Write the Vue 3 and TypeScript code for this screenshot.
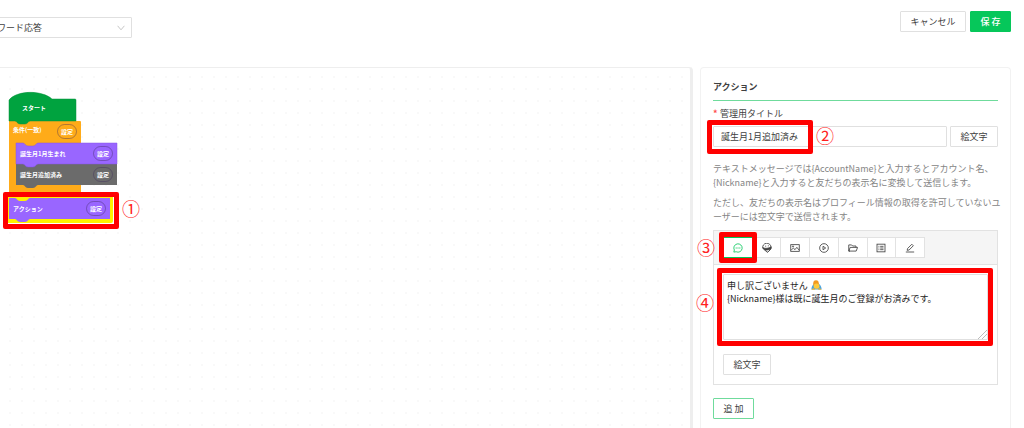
<script setup lang="ts">
import { ref } from 'vue'

interface Block {
  id: string
  label: string
  kind: string
  hasSetting: boolean
}

const blocks: Block[] = [
  { id: 'start', label: 'スタート', kind: 'start', hasSetting: false },
  { id: 'condition', label: '条件(一致)', kind: 'condition', hasSetting: true },
  { id: 'born', label: '誕生月1月生まれ', kind: 'born', hasSetting: true },
  { id: 'added', label: '誕生月追加済み', kind: 'added', hasSetting: true },
  { id: 'action', label: 'アクション', kind: 'action', hasSetting: true },
]

const tabs = [
  { id: 'text', label: 'テキスト' },
  { id: 'sticker', label: 'スタンプ' },
  { id: 'image', label: '画像' },
  { id: 'video', label: '動画' },
  { id: 'folder', label: 'フォルダ' },
  { id: 'list', label: 'リスト' },
  { id: 'edit', label: '編集' },
]

const responseType = ref('keyword')
const title = ref('誕生月1月追加済み')
const activeTab = ref('text')
const message = ref('申し訳ございません\u3000\n{Nickname}様は既に誕生月のご登録がお済みです。')
</script>

<template>
  <div class="page">
    <header class="topbar">
      <div class="type-select">
        <select v-model="responseType" aria-label="応答タイプ">
          <option value="keyword">キーワード応答</option>
        </select>
        <svg class="chevron" viewBox="0 0 8 6" aria-hidden="true">
          <path d="M0.6 0.8 L4 4.8 L7.4 0.8" fill="none" stroke="#bfbfbf" stroke-width="0.9" />
        </svg>
      </div>
      <div class="top-actions">
        <button type="button" class="btn cancel">キャンセル</button>
        <button type="button" class="btn save">保 存</button>
      </div>
    </header>

    <main class="workspace">
      <section class="canvas" aria-label="フロー">
        <svg class="shapes" viewBox="0 0 150 170" aria-hidden="true">
          <path d="M9 53 H80 Q81 53 81 54 V75 H40 V80 H16 V117 H81 V129 H9 Z" fill="#ffab19" />
          <path
            d="M9 32 C17 22 42 22 52 31 H75 Q76 31 76 32 V53 H30 C28 53 28 56 25 56 H20 C17 56 17 53 15 53 H9 Z"
            fill="#00a33f"
            stroke="#07913d"
            stroke-width="0.5"
          />
          <path
            d="M16 96 H117 V117 H38 C36 117 36 120 33 120 H28 C25 120 25 117 23 117 H16 Z"
            fill="#6b6b6b"
          />
          <path
            d="M16 75 H23 C25 75 25 78 28 78 H33 C36 78 36 75 38 75 H117 V96 H38 C36 96 36 99 33 99 H28 C25 99 25 96 23 96 H16 Z"
            fill="#9966ff"
            stroke="#8455e6"
            stroke-width="0.5"
          />
          <path d="M7 128 H113 V153 Q113 155 111 155 H7 Z" fill="#fff200" />
          <path
            d="M9 130 H15 C17 130 17 133 20 133 H25 C28 133 28 130 30 130 H110 V151 H30 C28 151 28 154 25 154 H20 C17 154 17 151 15 151 H9 Z"
            fill="#9966ff"
          />
        </svg>
        <div v-for="block in blocks" :key="block.id" class="node" :class="block.kind">
          <span>{{ block.label }}</span>
          <button v-if="block.hasSetting" type="button" class="setting">設定</button>
        </div>
        <div class="mark mark-action"><span class="num">①</span></div>
      </section>

      <aside class="panel">
        <h2>アクション</h2>
        <label class="field-label" for="manage-title"><span class="req">*</span>管理用タイトル</label>
        <div class="title-row">
          <input id="manage-title" v-model="title" type="text" />
          <button type="button" class="btn">絵文字</button>
          <div class="mark mark-title"><span class="num">②</span></div>
        </div>

        <div class="hints">
          <p>テキストメッセージでは{AccountName}と入力するとアカウント名、<br />{Nickname}と入力すると友だちの表示名に変換して送信します。</p>
          <p>ただし、友だちの表示名はプロフィール情報の取得を許可していないユ<br />ーザーには空文字で送信されます。</p>
        </div>

        <div class="message-card">
          <div class="tab-bar">
            <div class="tabs">
              <button
                v-for="tab in tabs"
                :key="tab.id"
                type="button"
                class="tab"
                :class="{ active: tab.id === activeTab }"
                :aria-label="tab.label"
                @click="activeTab = tab.id"
              >
                <svg viewBox="0 0 12 12" fill="none" stroke="currentColor" stroke-width="1" aria-hidden="true">
                  <template v-if="tab.id === 'text'">
                    <path d="M1 10.9 L1.6 8.4 A5 5 0 1 1 3.8 10.5 Z" />
                    <path d="M3.2 6 h1.2 M5.4 6 h1.2 M7.6 6 h1.2" stroke-width="1.2" />
                  </template>
                  <template v-else-if="tab.id === 'sticker'">
                    <path d="M1 6.4 A5 4.8 0 1 1 10.8 5.4" />
                    <path d="M1 5.6 C4 7.2 8 6.4 11 4.6 V6.8 C9 8.4 7.4 7.2 6.4 8.4 C4 8.8 1.8 8.4 1 5.6 Z" fill="currentColor" />
                    <path d="M3.6 8.6 L6.2 11.2 L8.4 9.6 L10.4 7.4" stroke-width="1.2" />
                    <path d="M3.8 3.8 h1.2 M7 3.4 h1.2" />
                  </template>
                  <template v-else-if="tab.id === 'image'">
                    <rect x="0.9" y="2" width="10.2" height="8" />
                    <path d="M1.2 8.8 L4 6 L6 8 L8.2 5.2 L11 8.6" />
                    <circle cx="3.6" cy="4.1" r="0.7" />
                  </template>
                  <template v-else-if="tab.id === 'video'">
                    <circle cx="6" cy="6" r="5.2" />
                    <path d="M4.8 3.9 L8 6 L4.8 8.1 Z" />
                  </template>
                  <template v-else-if="tab.id === 'folder'">
                    <path d="M2.4 9.7 H0.9 V2.3 H4.3 L5.6 3.6 H9.6 V5.3" />
                    <path d="M2.6 5.3 H11.5 L9.8 9.7 H1 Z" />
                  </template>
                  <template v-else-if="tab.id === 'list'">
                    <rect x="1.2" y="1.4" width="9.6" height="9.2" />
                    <path d="M3 4 h1 M5 4 h4 M3 6 h1 M5 6 h4 M3 8 h1 M5 8 h4" />
                  </template>
                  <template v-else>
                    <path d="M1 10.8 H11" />
                    <path d="M2.6 8.8 L3.1 6.6 L8.2 1.5 L10 3.3 L4.9 8.4 Z" />
                  </template>
                </svg>
              </button>
            </div>
            <div class="mark mark-tab"><span class="num">③</span></div>
          </div>

          <div class="message-body">
            <div class="message-box">
              <textarea v-model="message" aria-label="メッセージ本文"></textarea>
              <svg class="bow" viewBox="0 0 11 10" aria-hidden="true">
                <path d="M0.4 9.6 C0.4 6 2.6 3 5.5 3 C8.4 3 10.6 6 10.6 9.6 Z" fill="#4aa3df" />
                <ellipse cx="5" cy="3.6" rx="2.8" ry="3.4" fill="#f29a1f" />
                <ellipse cx="5.6" cy="6.2" rx="2.9" ry="2.6" fill="#ffca3a" />
                <path d="M0.4 9.8 L2.2 8 L4.4 9.8 Z M10.6 9.8 L8.8 8 L6.6 9.8 Z" fill="#f5b62e" />
              </svg>
              <div class="mark mark-message"><span class="num">④</span></div>
            </div>
            <button type="button" class="btn">絵文字</button>
          </div>
        </div>

        <button type="button" class="btn add">追 加</button>
      </aside>
    </main>
  </div>
</template>

<style>
body {
  margin: 0;
  background: #fff;
}
</style>

<style scoped>
.page {
  box-sizing: border-box;
  display: flex;
  flex-direction: column;
  height: 100vh;
  overflow: hidden;
  font-family: "Noto Sans CJK JP", "Noto Sans", sans-serif;
  font-size: 9px;
  line-height: 14px;
  color: #404040;
}

.page *,
.page *::before {
  box-sizing: border-box;
}

button,
input,
select,
textarea {
  margin: 0;
  font: inherit;
  color: inherit;
  border-radius: 1px;
}

.topbar {
  flex: none;
  display: flex;
  justify-content: space-between;
  height: 67px;
  padding: 11px 13px 0 0;
}

.type-select {
  position: relative;
  width: 160px;
  height: 21px;
  margin: 6px 0 0 -28px;
}

.type-select select {
  appearance: none;
  width: 100%;
  height: 21px;
  padding: 0 20px 0 6px;
  border: 1px solid #e0e0e0;
  background: #fff;
}

.chevron {
  position: absolute;
  top: 8px;
  right: 7px;
  width: 8px;
  height: 6px;
}

.top-actions {
  display: flex;
  align-items: flex-start;
  gap: 4px;
}

.btn {
  height: 21px;
  padding: 0 9px;
  border: 1px solid #e0e0e0;
  background: #fff;
  line-height: 19px;
  white-space: nowrap;
}

.cancel {
  width: 66px;
}

.save,
.add {
  width: 41px;
}

.save {
  border-color: #06c75a;
  background: #06c75a;
  color: #fff;
  font-weight: 500;
}

.workspace {
  flex: 1;
  display: flex;
  gap: 7px;
  min-height: 0;
  padding-right: 13px;
}

.canvas {
  position: relative;
  flex: 1;
  border-top: 1px solid #eee;
  border-right: 3px solid #eee;
  border-top-right-radius: 4px;
  background: radial-gradient(circle at 10px 9px, #eaeaea 0, #fff 1px) 0 0 / 12px 12px;
}

.shapes {
  position: absolute;
  top: 0;
  left: 0;
  width: 150px;
  height: 170px;
}

.node {
  position: absolute;
  display: flex;
  align-items: center;
  justify-content: space-between;
  height: 21px;
  color: #fff;
  font-size: 6px;
  font-weight: 700;
  line-height: 8px;
  white-space: nowrap;
}

.start {
  top: 29px;
  left: 22px;
  width: 50px;
}

.condition {
  top: 53px;
  left: 13px;
  width: 64px;
}

.condition span {
  padding-bottom: 4px;
}

.born {
  top: 75px;
  left: 20px;
  width: 93px;
}

.added {
  top: 96px;
  left: 20px;
  width: 93px;
}

.action {
  top: 130px;
  left: 13px;
  width: 93px;
}

.setting {
  width: 20px;
  height: 15px;
  padding: 0;
  border: 1px solid rgba(60, 40, 90, 0.4);
  border-radius: 8px;
  background: transparent;
  font-weight: 700;
  line-height: 12px;
}

.mark {
  position: absolute;
  z-index: 1;
  border: 5px solid #f00;
  border-radius: 2px;
  pointer-events: none;
}

.num {
  position: absolute;
  color: #ff2020;
  font-size: 18px;
  line-height: 20px;
}

.mark-action {
  top: 124px;
  left: 3px;
  width: 116px;
  height: 37px;
}

.mark-action .num {
  top: 1px;
  left: 114px;
}

.panel {
  flex: none;
  width: 311px;
  padding: 11px 12px;
  border: 1px solid #f2f2f2;
  border-bottom: 0;
  border-radius: 4px 4px 0 0;
  background: #fff;
}

.panel h2 {
  height: 22px;
  margin: 0;
  border-bottom: 1px solid #6fdb9c;
  font-size: 9px;
  font-weight: 700;
  line-height: 16px;
}

.field-label {
  display: block;
  margin-top: 6px;
  line-height: 14px;
}

.req {
  display: inline-block;
  width: 7px;
  color: #ff4d4f;
  font-weight: 700;
}

.title-row {
  position: relative;
  display: flex;
  gap: 3px;
  margin-top: 5px;
}

.title-row input {
  flex: 1;
  min-width: 0;
  height: 21px;
  padding: 0 7px;
  border: 1px solid #e0e0e0;
}

.title-row .btn,
.message-body .btn {
  width: 48px;
}

.mark-title {
  top: -6px;
  left: -6px;
  width: 106px;
  height: 34px;
}

.mark-title .num {
  top: 0;
  left: 104px;
}

.hints {
  margin-top: 15px;
  color: #858585;
  white-space: nowrap;
}

.hints p {
  margin: 0 0 6px;
}

.message-card {
  border: 1px solid #e2e2e2;
}

.tab-bar {
  position: relative;
  height: 34px;
  padding: 6px 10px;
  border-bottom: 1px solid #e2e2e2;
  background: #f5f5f5;
}

.tabs {
  display: flex;
  width: 201px;
}

.tab {
  flex: 1;
  display: flex;
  align-items: center;
  justify-content: center;
  height: 21px;
  padding: 0;
  border: 1px solid #e2e2e2;
  border-left-width: 0;
  border-radius: 0;
  background: #fff;
}

.tab svg {
  width: 10px;
  height: 10px;
}

.tab.active {
  border-color: #06c75a;
  color: #06c75a;
}

.mark-tab {
  top: 1px;
  left: 5px;
  width: 38px;
  height: 31px;
}

.mark-tab .num {
  top: 0;
  left: -27px;
}

.message-body {
  padding: 9px;
}

.message-box {
  position: relative;
  height: 66px;
  margin-bottom: 14px;
}

.message-box textarea {
  display: block;
  width: 100%;
  height: 66px;
  padding: 4px 3px;
  border: 1px solid #e0e0e0;
  background: #fff;
  color: #222;
  line-height: 13px;
  resize: vertical;
}

.message-box textarea::-webkit-resizer {
  background: linear-gradient(135deg, #fff 68%, #bbb 68%, #bbb 72%, #fff 72%, #fff 80%, #bbb 80%, #bbb 84%, #fff 84%);
}

.bow {
  position: absolute;
  top: 6px;
  left: 88px;
  width: 11px;
  height: 10px;
}

.mark-message {
  top: -6px;
  right: -5px;
  bottom: -6px;
  left: -6px;
}

.mark-message .num {
  top: 19px;
  left: -26px;
}

.add {
  display: block;
  margin-top: 13px;
  border-color: #6fdb9c;
}
</style>
